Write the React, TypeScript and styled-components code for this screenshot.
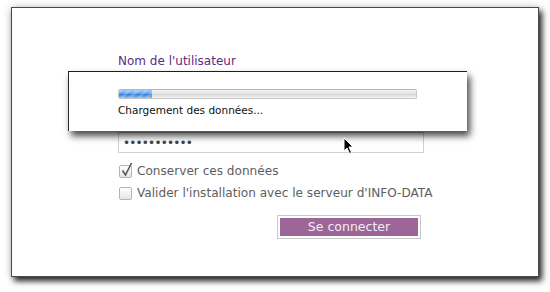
import React from "react";
import styled, { createGlobalStyle } from "styled-components";

const GlobalStyle = createGlobalStyle`
  html, body {
    margin: 0;
    padding: 0;
    background: #ffffff;
  }
  body {
    width: 550px;
    height: 292px;
    overflow: hidden;
    font-family: "DejaVu Sans", "Liberation Sans", sans-serif;
  }
`;

const Page = styled.div`
  position: relative;
  width: 550px;
  height: 292px;
  padding: 7px 0 0 11px;
  box-sizing: border-box;
`;

const Window = styled.div`
  position: relative;
  width: 528px;
  height: 270px;
  box-sizing: border-box;
  background: #fff;
  border: 1px solid #4a4a4a;
  box-shadow: 3px 4px 6px rgba(0, 0, 0, 0.85), 0 0 9px rgba(0, 0, 0, 0.18);
`;

const Form = styled.form`
  display: flex;
  flex-direction: column;
  width: 306px;
  margin-left: 106px;
  padding-top: 46px;
`;

const Label = styled.label`
  display: block;
  font-size: 12px;
  line-height: 14px;
  color: #5c2b85;
`;

const Field = styled.input<{ $gap?: number }>`
  display: block;
  box-sizing: border-box;
  width: 306px;
  height: 21px;
  margin: ${(p) => p.$gap ?? 0}px 0 0 0;
  padding: 0 4px;
  border: 1px solid #d0d0d0;
  border-top-color: #b8b8b8;
  background: #fff;
  font-family: "DejaVu Sans", sans-serif;
  font-size: 12px;
  letter-spacing: -0.8px;
  color: #444;
  outline: none;
`;

const CheckRow = styled.label<{ $first?: boolean }>`
  display: flex;
  align-items: center;
  gap: 5px;
  height: 22px;
  margin-top: ${(p) => (p.$first ? 7 : 0)}px;
  font-size: 12.1px;
  white-space: nowrap;
  color: #5e5e5e;
  padding-left: 1px;
`;

const Box = styled.span`
  position: relative;
  width: 13px;
  height: 13px;
  box-sizing: border-box;
  border: 1px solid #b4b4b4;
  border-radius: 2px;
  background: linear-gradient(#ffffff, #e6e6e6);
  flex: none;
`;

const Tick = styled.svg`
  position: absolute;
  left: 1px;
  top: -4px;
`;

const ButtonFrame = styled.div`
  align-self: flex-end;
  margin: 11px 3px 0 0;
  padding: 2px;
  border: 1px solid #c8c8c8;
  background: #fff;
`;

const Button = styled.button`
  display: block;
  width: 138px;
  height: 18px;
  padding: 0;
  border: none;
  background: #9c6698;
  color: #f4ecf4;
  font-family: "DejaVu Sans", sans-serif;
  font-size: 12.5px;
  line-height: 18px;
`;

const Sheet = styled.div`
  position: absolute;
  left: 56px;
  top: 63px;
  width: 399px;
  height: 60px;
  box-sizing: border-box;
  padding: 17px 0 0 49px;
  background: #fff;
  border-top: 1px solid #1e1e1e;
  border-left: 1px solid #2a2a2a;
  box-shadow: 3px 5px 7px rgba(0, 0, 0, 0.72);
`;

const Track = styled.div`
  position: relative;
  width: 299px;
  height: 10px;
  box-sizing: border-box;
  border-radius: 2px;
  border: 1px solid #c9c9c9;
  border-top-color: #b5b5b5;
  background: linear-gradient(#f4f4f4, #e2e2e2 50%, #d8d8d8 55%, #f2f2f2);
  overflow: hidden;
`;

const Fill = styled.div`
  height: 100%;
  background: repeating-linear-gradient(
      135deg,
      rgba(255, 255, 255, 0.18) 0 3px,
      rgba(255, 255, 255, 0) 3px 6px
    ),
    linear-gradient(#a9cdf6, #5ea2ec 45%, #2f7fe0 55%, #86bdf3);
`;

const Status = styled.div`
  margin-top: 5px;
  font-size: 10.5px;
  line-height: 13px;
  color: #111;
`;

const Pointer = styled.svg`
  position: absolute;
  left: 343px;
  top: 137px;
`;

export default function App() {
  const progress = 11;
  return (
    <>
      <GlobalStyle />
      <Page>
        <Window>
          <Form onSubmit={(e) => e.preventDefault()}>
            <Label htmlFor="user">Nom de l'utilisateur</Label>
            <Field id="user" $gap={4} defaultValue="" />
            <Field id="pass" type="password" $gap={39} defaultValue="xxxxxxxxxxx" readOnly />
            <CheckRow $first>
              <Box>
                <Tick width="12" height="15" viewBox="0 0 12 15">
                  <path d="M1.5 8.5 L4.5 13 L10.5 1" fill="none" stroke="#555" strokeWidth="1.6" />
                </Tick>
              </Box>
              Conserver ces données
            </CheckRow>
            <CheckRow>
              <Box />
              Valider l'installation avec le serveur d'INFO-DATA
            </CheckRow>
            <ButtonFrame>
              <Button type="submit">Se connecter</Button>
            </ButtonFrame>
          </Form>
          <Sheet>
            <Track>
              <Fill style={{ width: `${progress}%` }} />
            </Track>
            <Status>Chargement des données...</Status>
          </Sheet>
        </Window>
        <Pointer width="12" height="18" viewBox="0 0 12 18">
          <path d="M1 1 L1 14 L4 11 L6.5 16.5 L8.5 15.5 L6 10 L10 10 Z" fill="#000" stroke="#fff" strokeWidth="1" />
        </Pointer>
      </Page>
    </>
  );
}
